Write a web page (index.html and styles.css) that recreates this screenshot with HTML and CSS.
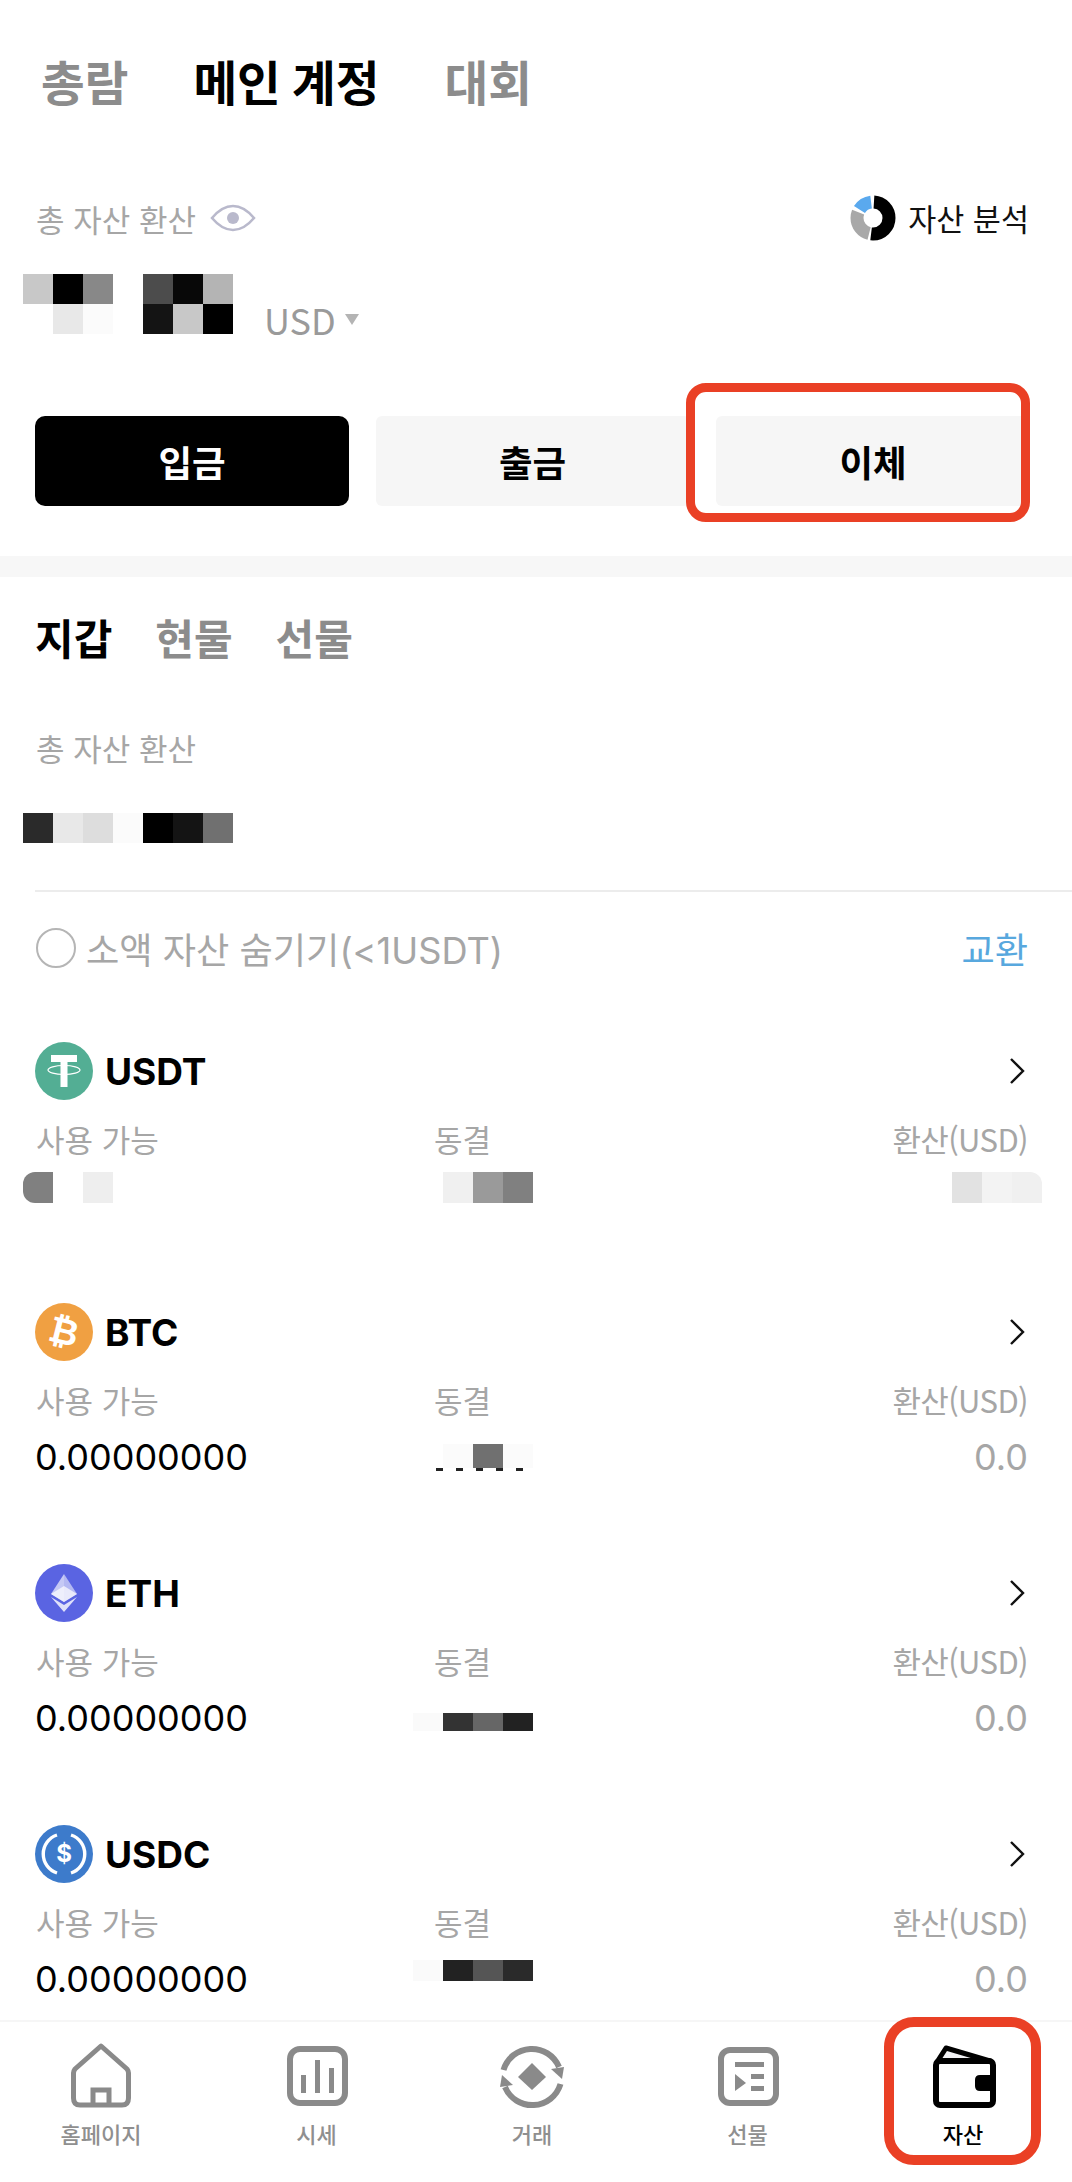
FILE: index.html
```html
<!DOCTYPE html>
<html lang="ko">
<head>
    <meta charset="UTF-8">
    <meta name="viewport" content="width=device-width, initial-scale=1.0">
    <title>자산</title>
    <link rel="stylesheet" href="styles.css">
</head>
<body>
    <div class="page">
        <div class="top">
            <div class="main-tabs">
                <span>총람</span>
                <span class="on">메인 계정</span>
                <span>대회</span>
            </div>
            <div class="total-row">
                <div class="total-label">
                    총 자산 환산
                    <svg class="eye" viewBox="0 0 46 30" width="46" height="30">
                        <path d="M2 15 Q12 3 23 3 Q34 3 44 15 Q34 27 23 27 Q12 27 2 15 Z" fill="none" stroke="#b9b9cc" stroke-width="2.6"/>
                        <circle cx="23" cy="15" r="6" fill="#b9b9cc"/>
                    </svg>
                </div>
                <div class="analysis">
                    <svg viewBox="0 0 46 46" width="46" height="46">
                        <g fill="none" stroke-width="13" transform="rotate(-90 23 23)">
                            <circle cx="23" cy="23" r="16" pathLength="100" stroke="#000" stroke-dasharray="51 100" stroke-dashoffset="-1"/>
                            <circle cx="23" cy="23" r="16" pathLength="100" stroke="#a8a8a8" stroke-dasharray="27 100" stroke-dashoffset="-54"/>
                            <circle cx="23" cy="23" r="16" pathLength="100" stroke="#5aa9ee" stroke-dasharray="14 100" stroke-dashoffset="-84"/>
                        </g>
                    </svg>
                    자산 분석
                </div>
            </div>
            <div class="balance">
                <div class="mosaic tall">
                    <i class="g-c8"></i><i class="g-00"></i><i class="g-88"></i>
                    <i class="g-ff"></i><i class="g-e8"></i><i class="g-fb"></i>
                </div>
                <div class="mosaic tall second">
                    <i class="g-4c"></i><i class="g-08"></i><i class="g-b4"></i>
                    <i class="g-14"></i><i class="g-c8"></i><i class="g-00"></i>
                </div>
                <span class="currency">USD<em></em></span>
            </div>
            <div class="actions">
                <button class="primary">입금</button>
                <button>출금</button>
                <button>이체</button>
            </div>
        </div>

        <div class="band"></div>

        <div class="wallet">
            <div class="sub-tabs">
                <span class="on">지갑</span>
                <span>현물</span>
                <span>선물</span>
            </div>
            <div class="sub-label">총 자산 환산</div>
            <div class="mosaic wide">
                <i class="g-2a"></i><i class="g-e8"></i><i class="g-dd"></i><i class="g-fb"></i><i class="g-00"></i><i class="g-14"></i><i class="g-70"></i>
            </div>
        </div>
        <div class="rule"></div>
        <div class="filter">
            <label><span class="radio"></span>소액 자산 숨기기(&lt;1USDT)</label>
            <a class="swap">교환</a>
        </div>

        <div class="coins">
            <div class="coin">
                <div class="coin-head">
                    <svg viewBox="0 0 58 58" width="58" height="58">
                        <circle cx="29" cy="29" r="29" fill="#53ae94"/>
                        <rect x="16" y="13" width="26" height="7" fill="#fff"/>
                        <rect x="25.500" y="19" width="7" height="26" fill="#fff"/>
                        <ellipse cx="29" cy="28" rx="16" ry="4.500" fill="none" stroke="#fff" stroke-width="1.200"/>
                    </svg>
                    <b>USDT</b>
                    <svg class="chev" viewBox="0 0 18 28" width="18" height="28"><path d="M3 2 L15 14 L3 26" fill="none" stroke="#111" stroke-width="2.400"/></svg>
                </div>
                <div class="coin-grid labels"><span>사용 가능</span><span>동결</span><span>환산(USD)</span></div>
                <div class="coin-grid values">
                    <div class="mosaic small left blur-a"><i class="g-80 round"></i><i class="g-ff"></i><i class="g-ee"></i></div>
                    <div class="mosaic small mid blur-a"><i class="g-f0"></i><i class="g-9a"></i><i class="g-80"></i></div>
                    <div class="mosaic small right blur-a"><i class="g-e2"></i><i class="g-f3"></i><i class="g-f0 round-r"></i></div>
                </div>
            </div>

            <div class="coin">
                <div class="coin-head">
                    <svg viewBox="0 0 58 58" width="58" height="58">
                        <circle cx="29" cy="29" r="29" fill="#f0a042"/>
                        <text class="btc" x="29" y="41" text-anchor="middle" transform="rotate(14 29 29)">₿</text>
                    </svg>
                    <b>BTC</b>
                    <svg class="chev" viewBox="0 0 18 28" width="18" height="28"><path d="M3 2 L15 14 L3 26" fill="none" stroke="#111" stroke-width="2.400"/></svg>
                </div>
                <div class="coin-grid labels"><span>사용 가능</span><span>동결</span><span>환산(USD)</span></div>
                <div class="coin-grid values">
                    <span class="num">0.00000000</span>
                    <div class="mosaic small mid blur-b"><i class="g-fb"></i><i class="g-70"></i><i class="g-fb"></i><u class="dashes"></u></div>
                    <span class="usd">0.0</span>
                </div>
            </div>

            <div class="coin">
                <div class="coin-head">
                    <svg viewBox="0 0 58 58" width="58" height="58">
                        <circle cx="29" cy="29" r="29" fill="#5a64e2"/>
                        <polygon points="29,10 16,30 29,38" fill="#fff" fill-opacity=".65"/>
                        <polygon points="29,10 42,30 29,38" fill="#fff" fill-opacity=".55"/>
                        <polygon points="16,30 29,22 42,30 29,38" fill="#fff" fill-opacity=".7"/>
                        <polygon points="16,33 29,41 42,33 29,48" fill="#fff" fill-opacity=".8"/>
                    </svg>
                    <b>ETH</b>
                    <svg class="chev" viewBox="0 0 18 28" width="18" height="28"><path d="M3 2 L15 14 L3 26" fill="none" stroke="#111" stroke-width="2.400"/></svg>
                </div>
                <div class="coin-grid labels"><span>사용 가능</span><span>동결</span><span>환산(USD)</span></div>
                <div class="coin-grid values">
                    <span class="num">0.00000000</span>
                    <div class="mosaic small mid blur-c faint"><i class="g-33"></i><i class="g-66"></i><i class="g-22"></i></div>
                    <span class="usd">0.0</span>
                </div>
            </div>

            <div class="coin">
                <div class="coin-head">
                    <svg viewBox="0 0 58 58" width="58" height="58">
                        <circle cx="29" cy="29" r="29" fill="#3d7bcb"/>
                        <path d="M22 10 A20 20 0 0 0 22 48 M36 10 A20 20 0 0 1 36 48" fill="none" stroke="#fff" stroke-width="3.400"/>
                        <text class="usdc" x="29" y="37" text-anchor="middle">$</text>
                    </svg>
                    <b>USDC</b>
                    <svg class="chev" viewBox="0 0 18 28" width="18" height="28"><path d="M3 2 L15 14 L3 26" fill="none" stroke="#111" stroke-width="2.400"/></svg>
                </div>
                <div class="coin-grid labels"><span>사용 가능</span><span>동결</span><span>환산(USD)</span></div>
                <div class="coin-grid values">
                    <span class="num">0.00000000</span>
                    <div class="mosaic small mid blur-d faint"><i class="g-22"></i><i class="g-55"></i><i class="g-2a"></i></div>
                    <span class="usd">0.0</span>
                </div>
            </div>
        </div>

        <nav class="tabbar">
            <div class="tab">
                <svg viewBox="0 0 66 66" width="66" height="66">
                    <path d="M33 3 L59 26 Q60.500 28 60.500 30 V55 Q60.500 62 54 62 H12 Q5.500 62 5.500 55 V30 Q5.500 28 7 26 Z" fill="none" stroke="#8a8a8a" stroke-width="5" stroke-linejoin="round"/>
                    <path d="M25 62 V47 H41 V62" fill="none" stroke="#8a8a8a" stroke-width="5"/>
                </svg>
                <span>홈페이지</span>
            </div>
            <div class="tab">
                <svg viewBox="0 0 66 66" width="66" height="66">
                    <rect x="6" y="6" width="55" height="54" rx="10" fill="none" stroke="#8a8a8a" stroke-width="6"/>
                    <rect x="17" y="32" width="5" height="18" fill="#8a8a8a"/>
                    <rect x="31" y="17" width="5" height="33" fill="#8a8a8a"/>
                    <rect x="45" y="25" width="5" height="25" fill="#8a8a8a"/>
                </svg>
                <span>시세</span>
            </div>
            <div class="tab">
                <svg viewBox="0 0 66 66" width="66" height="66">
                    <path d="M4.500 27 A29.500 29.500 0 0 1 60 24 M61.500 41 A29.500 29.500 0 0 1 6 44" fill="none" stroke="#8a8a8a" stroke-width="6"/>
                    <polygon points="52,26 65,24 63,36" fill="#8a8a8a"/>
                    <polygon points="14,42 1,44 3,32" fill="#8a8a8a"/>
                    <polygon points="33,20 47,34 33,47 19,34" fill="#8a8a8a"/>
                </svg>
                <span>거래</span>
            </div>
            <div class="tab">
                <svg viewBox="0 0 66 66" width="66" height="66">
                    <rect x="6" y="7" width="55" height="53" rx="9" fill="none" stroke="#8a8a8a" stroke-width="6"/>
                    <rect x="20" y="19" width="29" height="5" fill="#8a8a8a"/>
                    <polygon points="20,31 31,40 20,48" fill="#8a8a8a"/>
                    <rect x="36" y="31" width="13" height="5" fill="#8a8a8a"/>
                    <rect x="36" y="43" width="13" height="5" fill="#8a8a8a"/>
                </svg>
                <span>선물</span>
            </div>
            <div class="tab on">
                <svg viewBox="0 0 66 66" width="66" height="66">
                    <polygon points="7,19 16,5 60,18" fill="#f1f1f4" stroke="#000" stroke-width="5" stroke-linejoin="round"/>
                    <rect x="6" y="18" width="57" height="44" rx="4" fill="#fff" stroke="#000" stroke-width="6"/>
                    <path d="M66 32 H50 Q45 32 45 37 V43 Q45 48 50 48 H66 Z" fill="#000"/>
                </svg>
                <span>자산</span>
            </div>
        </nav>

        <div class="mark mark-transfer"></div>
        <div class="mark mark-assets"></div>
    </div>
</body>
</html>
```

FILE: styles.css
```css
body {
    margin: 0;
    background: #fff;
    font-family: Inter, "Noto Sans CJK KR", sans-serif;
    color: #000;
}
.page {
    position: relative;
    width: 1072px;
    height: 2182px;
    overflow: hidden;
    display: flex;
    flex-direction: column;
}

/* top block */
.top {
    padding: 54px 44px 50px 36px;
}
.main-tabs {
    display: flex;
    gap: 65px;
    margin-left: 5px;
    font-size: 47.5px;
    line-height: 60px;
    font-weight: 700;
    color: #8c8c8c;
}
.main-tabs .on {
    color: #000;
}
.total-row {
    display: flex;
    justify-content: space-between;
    align-items: center;
    height: 46px;
    margin-top: 81px;
}
.total-label {
    display: flex;
    align-items: center;
    gap: 14px;
    font-size: 31px;
    color: #a6a6a6;
}
.analysis {
    display: flex;
    align-items: center;
    gap: 12px;
    margin-right: -1px;
    font-size: 30.5px;
    color: #111;
}
.analysis svg {
    margin-left: 2px;
}
.balance {
    display: flex;
    align-items: flex-end;
    margin: 33px 0 0 -13px;
}
.mosaic {
    display: grid;
    grid-auto-rows: 30px;
}
.mosaic i {
    display: block;
}
.mosaic.tall {
    grid-template-columns: repeat(3, 30px);
}
.mosaic.second {
    margin-left: 30px;
}
.mosaic.wide {
    grid-template-columns: repeat(7, 30px);
    margin: 41px 0 0 -12px;
    width: 210px;
}
.mosaic.small {
    grid-template-columns: repeat(3, 30px);
    width: 90px;
    align-self: start;
}
.currency {
    display: flex;
    align-items: center;
    gap: 9px;
    margin: 0 0 -2px 31px;
    font-family: "Noto Sans CJK KR", sans-serif;
    font-size: 36px;
    line-height: 34px;
    color: #9a9a9a;
}
.currency em {
    width: 0;
    height: 0;
    border-left: 7px solid transparent;
    border-right: 7px solid transparent;
    border-top: 11px solid #b4b4b4;
}
.actions {
    display: flex;
    gap: 26.5px;
    margin: 82px -5px 0 -1px;
}
.actions button {
    width: 314px;
    height: 90px;
    border: none;
    border-radius: 6px;
    background: #f6f6f6;
    color: #000;
    font-family: inherit;
    font-size: 36.5px;
    font-weight: 700;
}
.actions .primary {
    background: #000;
    color: #fff;
    border-radius: 10px;
}
.band {
    height: 21px;
    background: #f7f7f7;
}

/* wallet summary */
.wallet {
    padding: 35px 35px 0 35px;
}
.sub-tabs {
    display: flex;
    gap: 43px;
    font-size: 42px;
    line-height: 56px;
    font-weight: 700;
    color: #8c8c8c;
}
.sub-tabs .on {
    color: #000;
}
.sub-label {
    margin: 60px 0 0 1px;
    font-size: 31px;
    line-height: 44px;
    color: #a6a6a6;
}
.rule {
    height: 2px;
    margin: 47px 0 0 35px;
    background: #ececec;
}
.filter {
    display: flex;
    justify-content: space-between;
    align-items: center;
    height: 44px;
    margin-top: 34px;
    padding: 0 44px 0 36px;
    font-size: 36.2px;
    color: #a6a6a6;
}
.filter label {
    display: flex;
    align-items: center;
    gap: 10px;
}
.radio {
    box-sizing: border-box;
    width: 40px;
    height: 40px;
    border: 2px solid #b5b5b5;
    border-radius: 50%;
}
.swap {
    color: #58a8de;
}

/* coin list */
.coins {
    flex: 1;
    margin-top: 72px;
    padding: 0 44px 0 35px;
    overflow: hidden;
}
.coin {
    height: 261px;
}
.coin-head {
    display: flex;
    align-items: center;
    height: 58px;
}
.coin-head b {
    margin-left: 12px;
    font-size: 37px;
    font-weight: 700;
}
.chev {
    margin-left: auto;
    margin-right: 2px;
}
.coin-grid {
    display: grid;
    grid-template-columns: 398px 1fr auto;
    align-items: center;
    padding-left: 1px;
}
.labels {
    margin-top: 17px;
    font-family: "Noto Sans CJK KR", sans-serif;
    font-size: 31px;
    line-height: 44px;
    color: #a6a6a6;
}
.labels span:last-child {
    letter-spacing: -0.6px;
}
.values {
    grid-template-rows: 44px;
    margin-top: 13px;
    height: 44px;
    font-size: 36px;
    line-height: 44px;
}
.num {
    margin-left: -1px;
}
.usd {
    color: #a6a6a6;
}
.mosaic.left {
    margin-left: -13px;
}
.mosaic.mid {
    margin-left: 9px;
}
.mosaic.right {
    margin-right: -14px;
    justify-self: end;
}
.blur-a {
    grid-auto-rows: 31px;
    margin-top: -2px;
}
.blur-b {
    grid-template-rows: 24px 3px;
    margin-top: 9px;
}
.blur-c {
    grid-auto-rows: 18px;
    margin-top: 17px;
}
.blur-d {
    grid-auto-rows: 21px;
    margin-top: 3px;
}
.faint {
    box-shadow: -30px 0 0 #fafafa;
}
.dashes {
    grid-column: 1 / -1;
    height: 3px;
    margin-left: -7px;
    background: repeating-linear-gradient(90deg, #222 0 7px, transparent 7px 20px);
}
.round {
    border-radius: 12px 0 0 12px;
}
.round-r {
    border-radius: 0 12px 0 0;
}
.btc {
    font-family: "DejaVu Sans", sans-serif;
    font-size: 36px;
    font-weight: 700;
    fill: #fff;
}
.usdc {
    font-family: Inter, sans-serif;
    font-size: 24px;
    font-weight: 700;
    fill: #fff;
}

/* bottom bar */
.tabbar {
    display: flex;
    justify-content: space-between;
    flex-shrink: 0;
    height: 139px;
    padding: 21px 49px 0 41px;
    border-top: 2px solid #f6f6f6;
    background: #fff;
}
.tab {
    display: flex;
    flex-direction: column;
    align-items: center;
    width: 120px;
    font-size: 22px;
    line-height: 30px;
    font-weight: 500;
    color: #8f8f8f;
}
.tab span {
    margin-top: 11px;
}
.tab.on {
    color: #000;
}

/* red annotations drawn over the screenshot */
.mark {
    position: absolute;
    box-sizing: border-box;
    border: 9px solid #ea4025;
}
.mark-transfer {
    left: 686px;
    top: 383px;
    width: 344px;
    height: 139px;
    border-radius: 20px;
}
.mark-assets {
    left: 884px;
    top: 2017px;
    width: 157px;
    height: 148px;
    border-width: 10px;
    border-radius: 30px;
}

/* greys of the blurred numbers */
.g-00 { background: #000; }
.g-08 { background: #080808; }
.g-14 { background: #141414; }
.g-22 { background: #222; }
.g-2a { background: #2a2a2a; }
.g-33 { background: #333; }
.g-4c { background: #4c4c4c; }
.g-55 { background: #555; }
.g-66 { background: #666; }
.g-70 { background: #707070; }
.g-80 { background: #808080; }
.g-88 { background: #888; }
.g-9a { background: #9a9a9a; }
.g-b4 { background: #b4b4b4; }
.g-c8 { background: #c8c8c8; }
.g-dd { background: #ddd; }
.g-e2 { background: #e2e2e2; }
.g-e8 { background: #e8e8e8; }
.g-ee { background: #eee; }
.g-f0 { background: #f0f0f0; }
.g-f3 { background: #f3f3f3; }
.g-fb { background: #fbfbfb; }
.g-ff { background: #fff; }
```
